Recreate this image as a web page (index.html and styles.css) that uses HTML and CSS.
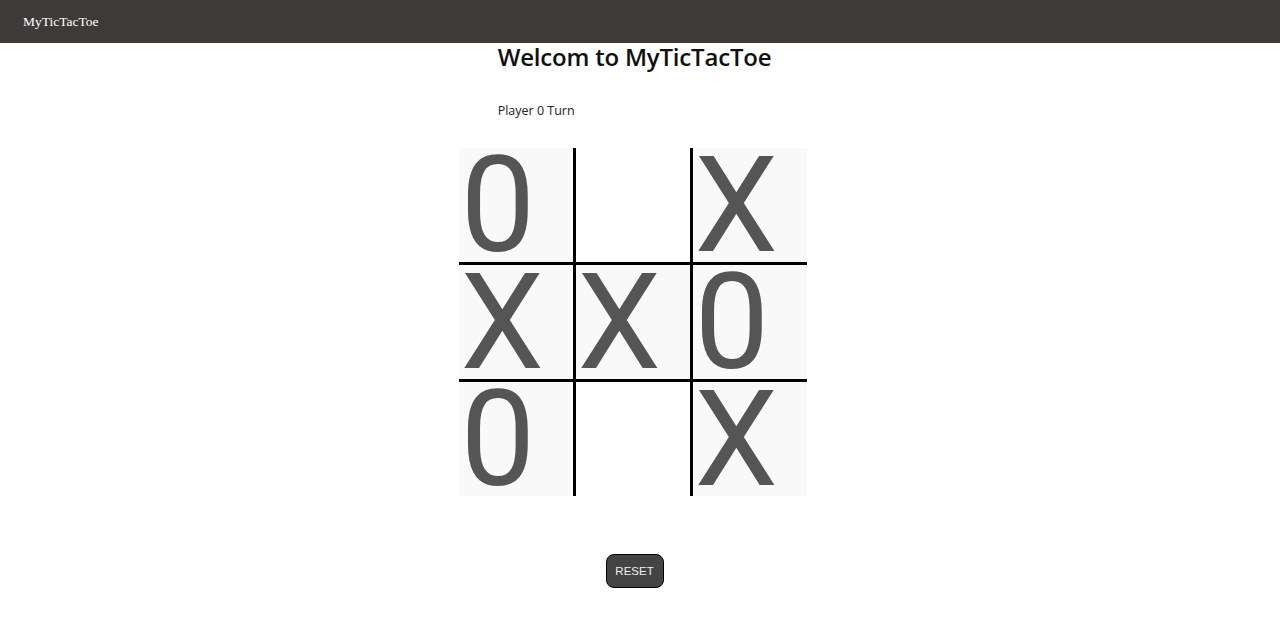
FILE: index.html
```html
<!DOCTYPE html>
<html>
<head>
<meta charset="utf-8">
<title>MyTicTacToe</title>
<link rel="stylesheet" href="styles.css">
</head>
<body>
<nav class="navbar"><span class="brand">MyTicTacToe</span></nav>
<main class="main">
  <div class="intro">
    <h1 class="title">Welcom to MyTicTacToe</h1>
    <p class="turn">Player 0 Turn</p>
  </div>
  <div class="board">
    <div class="cell filled br bb">0</div>
    <div class="cell br bb"></div>
    <div class="cell filled bb">X</div>
    <div class="cell filled br bb">X</div>
    <div class="cell filled br bb">X</div>
    <div class="cell filled bb">0</div>
    <div class="cell filled br">0</div>
    <div class="cell br"></div>
    <div class="cell filled">X</div>
  </div>
  <button class="reset">RESET</button>
</main>
</body>
</html>
```
FILE: styles.css
```css
* { box-sizing: border-box; }
html, body { margin: 0; padding: 0; background: #fff; }
body { font-family: "Liberation Sans", Arial, sans-serif; }

.navbar {
  height: 43px;
  background: #3e3a38;
  display: flex;
  align-items: center;
  padding-left: 23px;
}
.brand {
  font-family: "Liberation Serif", "Times New Roman", serif;
  font-size: 13.5px;
  color: #fff;
  line-height: 16px;
  padding-top: 1px;
}

.main {
  display: flex;
  flex-direction: column;
  align-items: center;
  padding-right: 15px;
}
.intro {
  display: flex;
  flex-direction: column;
  align-items: flex-start;
  margin-left: 4px;
}
.title {
  margin: 0;
  font-family: "Open Sans", "Noto Sans", sans-serif;
  font-weight: 600;
  font-size: 24px;
  line-height: 28px;
  color: #111;
  letter-spacing: -0.2px;
}
.turn {
  margin: 32px 0 0 0;
  font-family: "Open Sans", "Noto Sans", sans-serif;
  font-size: 12.5px;
  line-height: 16px;
  color: #222;
}

.board {
  margin-top: 29px;
  display: grid;
  grid-template-columns: 117px 117px 114px;
  grid-template-rows: 117px 117px 114px;
}
.cell {
  background: #fff;
  font-family: Roboto, "Liberation Sans", sans-serif;
  font-size: 133px;
  line-height: 116px;
  color: #555;
  padding-left: 2px;
}
.cell.filled { background: #f9f9f9; }
.cell.br { border-right: 3px solid #000; }
.cell.bb { border-bottom: 3px solid #000; }

.reset {
  margin-top: 58px;
  margin-left: 4px;
  width: 58px;
  height: 34px;
  background: #444;
  color: #eee;
  border: 1.5px solid #000;
  border-radius: 8px;
  font-family: "Liberation Sans", Arial, sans-serif;
  font-size: 11.5px;
  padding: 0;
}
```
